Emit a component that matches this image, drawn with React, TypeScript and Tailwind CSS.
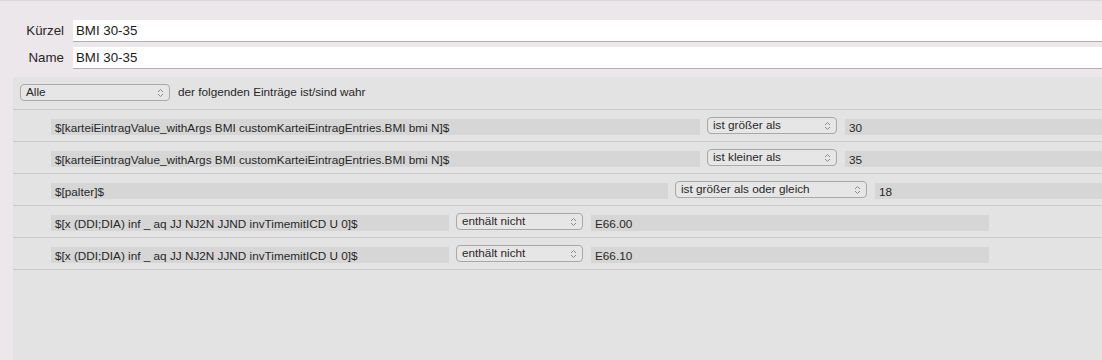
const font = { fontFamily: '"Liberation Sans", Arial, sans-serif' }

function Chevrons() {
  return (
    <svg width="7" height="10" viewBox="0 0 7 10" className="shrink-0">
      <path d="M1 4 L3.5 1.5 L6 4" fill="none" stroke="#8a8a8a" strokeWidth="1" />
      <path d="M1 6 L3.5 8.5 L6 6" fill="none" stroke="#8a8a8a" strokeWidth="1" />
    </svg>
  )
}

function Popup({ label, width }: { label: string; width: string }) {
  return (
    <div
      className={`${width} h-[17px] shrink-0 flex items-center justify-between pl-[5px] pr-[5px] rounded-[4px] border border-[#a9a9a9] bg-[#e6e6e6] text-[11.75px] text-[#262626] leading-none whitespace-nowrap`}
    >
      <span className="-mt-[2px]">{label}</span>
      <Chevrons />
    </div>
  )
}

function Field({ text, width }: { text: string; width: string }) {
  return (
    <div
      className={`${width} h-[16px] shrink-0 flex items-center pl-[4px] pt-[2px] bg-[#d6d6d6] text-[11.75px] text-[#262626] leading-none whitespace-nowrap overflow-hidden`}
    >
      {text}
    </div>
  )
}

type Rule = {
  left: string
  leftW: string
  op: string
  opW: string
  value: string
  valueW: string
}

const rules: Rule[] = [
  {
    left: '$[karteiEintragValue_withArgs BMI customKarteiEintragEntries.BMI bmi N]$',
    leftW: 'w-[649px]',
    op: 'ist größer als',
    opW: 'w-[130px]',
    value: '30',
    valueW: 'w-[300px]',
  },
  {
    left: '$[karteiEintragValue_withArgs BMI customKarteiEintragEntries.BMI bmi N]$',
    leftW: 'w-[649px]',
    op: 'ist kleiner als',
    opW: 'w-[130px]',
    value: '35',
    valueW: 'w-[300px]',
  },
  {
    left: '$[palter]$',
    leftW: 'w-[617px]',
    op: 'ist größer als oder gleich',
    opW: 'w-[192px]',
    value: '18',
    valueW: 'w-[300px]',
  },
  {
    left: '$[x (DDI;DIA) inf _ aq JJ NJ2N JJND invTimemitICD U 0]$',
    leftW: 'w-[398px]',
    op: 'enthält nicht',
    opW: 'w-[127px]',
    value: 'E66.00',
    valueW: 'w-[398px]',
  },
  {
    left: '$[x (DDI;DIA) inf _ aq JJ NJ2N JJND invTimemitICD U 0]$',
    leftW: 'w-[398px]',
    op: 'enthält nicht',
    opW: 'w-[127px]',
    value: 'E66.10',
    valueW: 'w-[398px]',
  },
]

export default function App() {
  return (
    <div
      className="w-[1102px] h-[360px] overflow-hidden bg-[#ece7eb] border-t border-[#dcd6da] flex flex-col"
      style={font}
    >
      {/* Kürzel / Name */}
      <div className="flex flex-col gap-[5px] pt-[19px]">
        {[
          ['Kürzel', 'BMI 30-35'],
          ['Name', 'BMI 30-35'],
        ].map(([label, value]) => (
          <div key={label} className="flex items-center">
            <div className="w-[64px] shrink-0 text-right text-[13.3px] text-[#262626]">{label}</div>
            <div className="ml-[9px] w-[1100px] h-[22px] shrink-0 flex items-center pl-[3px] bg-white border-b border-[#b0b0b0] text-[13.3px] text-[#1a1a1a]">
              {value}
            </div>
          </div>
        ))}
      </div>

      {/* rules panel */}
      <div className="ml-[13px] mt-[8px] flex-1 bg-[#e3e3e3]">
        <div className="h-[33px] flex items-start pl-[7px] border-b border-[#c9c9c9]">
          <div className="mt-[7px]">
            <Popup label="Alle" width="w-[150px]" />
          </div>
          <span className="ml-[8px] mt-[9px] text-[11.75px] leading-none text-[#262626]">
            der folgenden Einträge ist/sind wahr
          </span>
        </div>
        {rules.map((r, i) => (
          <div key={i} className="h-[32px] flex items-start pl-[38px] border-b border-[#c9c9c9]">
            <div className="mt-[9px]">
              <Field text={r.left} width={r.leftW} />
            </div>
            <div className="ml-[7px] mt-[7px]">
              <Popup label={r.op} width={r.opW} />
            </div>
            <div className="ml-[8px] mt-[9px]">
              <Field text={r.value} width={r.valueW} />
            </div>
          </div>
        ))}
      </div>
    </div>
  )
}
